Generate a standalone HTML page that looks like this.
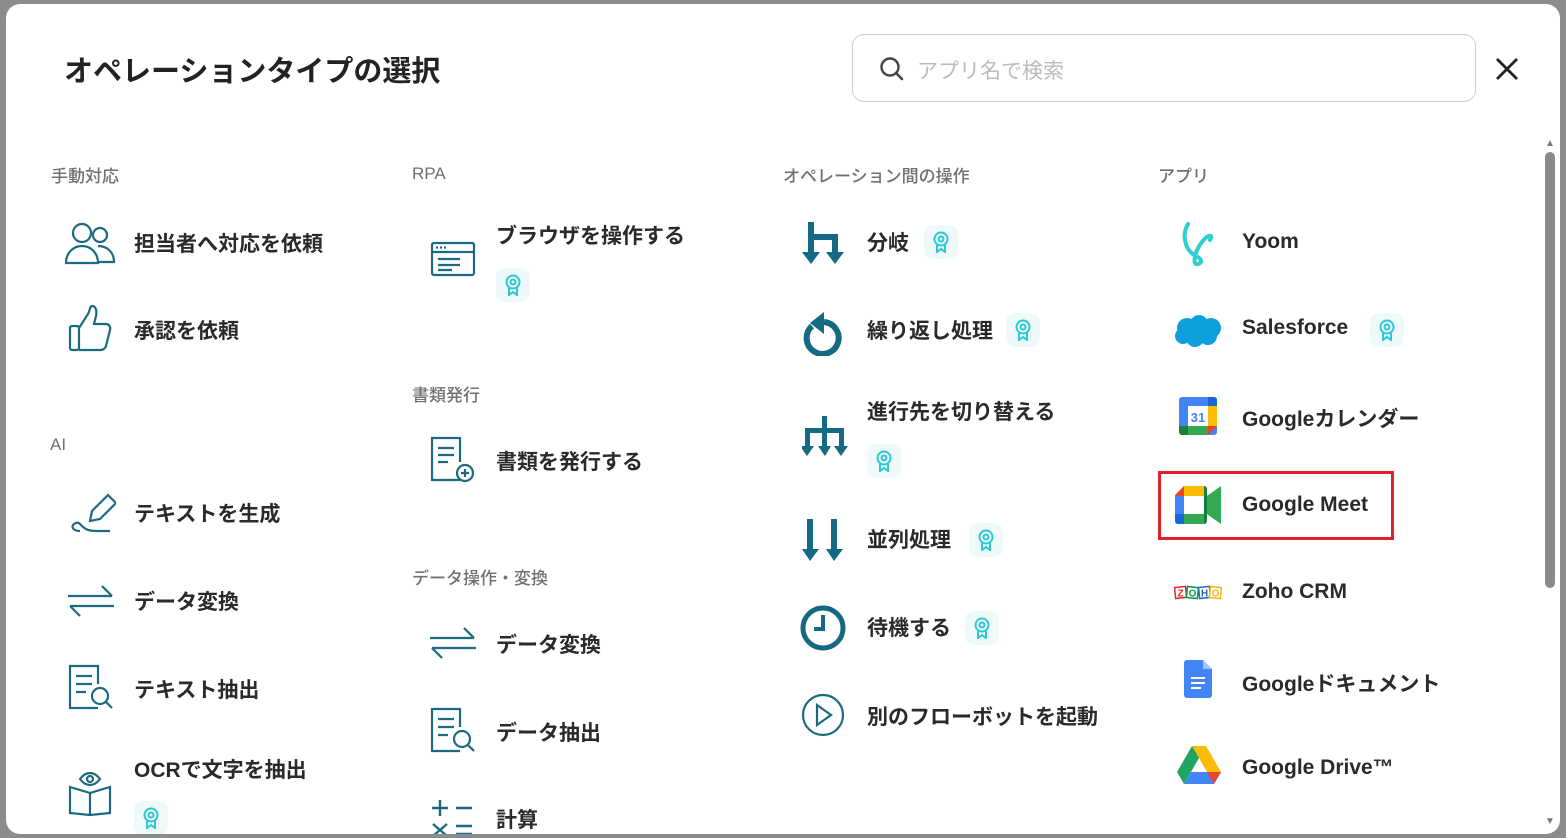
<!DOCTYPE html>
<html><head><meta charset="utf-8"><style>
*{margin:0;padding:0;box-sizing:border-box}
body{width:1566px;height:838px;background:#8c8c8c;overflow:hidden;font-family:"Liberation Sans","Noto Sans CJK JP",sans-serif;position:relative}
.modal{position:absolute;left:6px;top:4px;width:1554px;height:830px;background:#fff;border-radius:14px;overflow:hidden}
.a{position:absolute;white-space:nowrap}
h1{position:absolute;left:58px;top:44px;font-size:29px;font-weight:700;color:#222}
.sec{position:absolute;font-size:17px;color:#707070;font-weight:500}
.it{position:absolute;font-size:21px;font-weight:600;color:#2a2a2a;white-space:nowrap;margin-top:-2px}
.bd{position:absolute;width:34px;height:34px;border-radius:9px;background:#eef9f9}
.bd svg{position:absolute;left:8px;top:6px}
.ic{position:absolute}
</style></head><body>
<div class="modal">
<h1>オペレーションタイプの選択</h1>
<div class="a" style="left:846px;top:30px;width:624px;height:68px;border:1px solid #ccc;border-radius:12px"></div>
<svg class="ic" style="left:873px;top:52px" width="26" height="26" viewBox="0 0 26 26"><circle cx="11" cy="11" r="8.5" fill="none" stroke="#444" stroke-width="2.4"/><path d="M17 17l6 6" stroke="#444" stroke-width="2.6" stroke-linecap="round"/></svg>
<div class="a" style="left:911px;top:51px;font-size:21px;color:#bbb">アプリ名で検索</div>
<svg class="ic" style="left:1488px;top:52px" width="26" height="26" viewBox="0 0 26 26"><path d="M3 3l20 20M23 3L3 23" stroke="#222" stroke-width="2.8"/></svg>

<div class="sec" style="left:45px;top:158px">手動対応</div>
<div class="sec" style="left:406px;top:160px">RPA</div>
<div class="sec" style="left:777px;top:158px">オペレーション間の操作</div>
<div class="sec" style="left:1152px;top:158px">アプリ</div>
<div class="sec" style="left:406px;top:377px">書類発行</div>
<div class="sec" style="left:44px;top:431px">AI</div>
<div class="sec" style="left:406px;top:560px">データ操作・変換</div>

<!-- col1 -->
<svg class="ic" style="left:58px;top:215px" width="54" height="46" viewBox="0 0 54 46" fill="none" stroke="#1b6a80" stroke-width="2.2"><circle cx="18" cy="14" r="9"/><path d="M2 44c0-10 7-17 16-17s16 7 16 17z"/><circle cx="36" cy="16" r="7"/><path d="M34 27c9 0 16 6 16 16H34"/></svg>
<div class="it" style="left:128px;top:226px">担当者へ対応を依頼</div>
<svg class="ic" style="left:62px;top:300px" width="44" height="48" viewBox="0 0 44 48" fill="none" stroke="#1b6a80" stroke-width="2.2"><rect x="2" y="22" width="9" height="24" rx="2"/><path d="M11 24l9-14c2-4 2-8 4-8 4 0 5 5 4 10l-2 8h12c3 0 5 3 4 6l-4 16c-1 3-3 4-6 4H11"/></svg>
<div class="it" style="left:128px;top:313px">承認を依頼</div>
<svg class="ic" style="left:62px;top:487px" width="48" height="46" viewBox="0 0 48 46" fill="none" stroke="#1b6a80" stroke-width="2.2"><path d="M22 30l2-10 16-16 8 8-16 16z"/><path d="M12 40c-8 0-10-6-4-8s4 8 20 8h14"/></svg>
<div class="it" style="left:128px;top:496px">テキストを生成</div>
<svg class="ic" style="left:60px;top:580px" width="50" height="34" viewBox="0 0 50 34" fill="none" stroke="#1b6a80" stroke-width="2.2"><path d="M2 12h44M36 2l10 10M48 22H4M14 32L4 22"/></svg>
<div class="it" style="left:128px;top:584px">データ変換</div>
<svg class="ic" style="left:62px;top:660px" width="46" height="48" viewBox="0 0 46 48" fill="none" stroke="#1b6a80" stroke-width="2.2"><path d="M30 44H2V2h28v18"/><path d="M8 12h16M8 20h16M8 28h10"/><circle cx="32" cy="32" r="8"/><path d="M38 38l6 6"/></svg>
<div class="it" style="left:128px;top:672px">テキスト抽出</div>
<svg class="ic" style="left:62px;top:765px" width="44" height="48" viewBox="0 0 44 48" fill="none" stroke="#1b6a80" stroke-width="2.2"><path d="M2 18l20 6 20-6v26l-20 2-20-2z"/><path d="M22 24v22"/><path d="M12 10c6-8 14-8 20 0-6 8-14 8-20 0z"/><circle cx="22" cy="10" r="3"/></svg>
<div class="it" style="left:128px;top:752px">OCRで文字を抽出</div>
<div class="bd" style="left:128px;top:797px"><svg width="18" height="22" viewBox="0 0 18 22" fill="none" stroke="#2cc7d6" stroke-width="2"><circle cx="9" cy="8" r="6.5"/><circle cx="9" cy="8" r="2.5"/><path d="M5 14v7l4-3 4 3v-7"/></svg></div>

<!-- col2 -->
<svg class="ic" style="left:424px;top:237px" width="46" height="36" viewBox="0 0 46 36" fill="none" stroke="#1b6a80" stroke-width="2.2"><rect x="2" y="2" width="42" height="32" rx="2"/><path d="M2 11h42M8 18h22M8 24h22M8 29h14"/><path d="M6 6.5h2M10 6.5h2M14 6.5h2"/></svg>
<div class="it" style="left:490px;top:218px">ブラウザを操作する</div>
<div class="bd" style="left:490px;top:264px"><svg width="18" height="22" viewBox="0 0 18 22" fill="none" stroke="#2cc7d6" stroke-width="2"><circle cx="9" cy="8" r="6.5"/><circle cx="9" cy="8" r="2.5"/><path d="M5 14v7l4-3 4 3v-7"/></svg></div>
<svg class="ic" style="left:424px;top:432px" width="46" height="48" viewBox="0 0 46 48" fill="none" stroke="#1b6a80" stroke-width="2.2"><path d="M30 44H2V2h28v24"/><path d="M8 12h16M8 19h16M8 26h10"/><circle cx="35" cy="37" r="8"/><path d="M35 33v8M31 37h8"/></svg>
<div class="it" style="left:490px;top:444px">書類を発行する</div>
<svg class="ic" style="left:422px;top:622px" width="50" height="34" viewBox="0 0 50 34" fill="none" stroke="#1b6a80" stroke-width="2.2"><path d="M2 12h44M36 2l10 10M48 22H4M14 32L4 22"/></svg>
<div class="it" style="left:490px;top:627px">データ変換</div>
<svg class="ic" style="left:424px;top:703px" width="46" height="48" viewBox="0 0 46 48" fill="none" stroke="#1b6a80" stroke-width="2.2"><path d="M30 44H2V2h28v18"/><path d="M8 12h16M8 20h16M8 28h10"/><circle cx="32" cy="32" r="8"/><path d="M38 38l6 6"/></svg>
<div class="it" style="left:490px;top:715px">データ抽出</div>
<svg class="ic" style="left:424px;top:794px" width="44" height="40" viewBox="0 0 44 40" fill="none" stroke="#1b6a80" stroke-width="2.4"><path d="M2 10h16M10 2v16M26 10h16M3 26l14 12M17 26L3 38M26 28h16M26 36h16"/></svg>
<div class="it" style="left:490px;top:802px">計算</div>

<!-- col3 -->
<svg class="ic" style="left:796px;top:218px" width="42" height="42" viewBox="0 0 42 42" fill="#136a82"><path d="M6 0h6v30h6L9 42 0 30h6zM12 12h24v18h6l-9 12-9-12h6V18H12z"/></svg>
<div class="it" style="left:861px;top:225px">分岐</div>
<div class="bd" style="left:918px;top:221px"><svg width="18" height="22" viewBox="0 0 18 22" fill="none" stroke="#2cc7d6" stroke-width="2"><circle cx="9" cy="8" r="6.5"/><circle cx="9" cy="8" r="2.5"/><path d="M5 14v7l4-3 4 3v-7"/></svg></div>
<svg class="ic" style="left:796px;top:306px" width="42" height="46" viewBox="0 0 42 46" fill="none"><path d="M10 16a16 16 0 1 0 12-4" stroke="#136a82" stroke-width="6"/><path d="M22 2v22L8 13z" fill="#136a82"/></svg>
<div class="it" style="left:861px;top:313px">繰り返し処理</div>
<div class="bd" style="left:1000px;top:309px"><svg width="18" height="22" viewBox="0 0 18 22" fill="none" stroke="#2cc7d6" stroke-width="2"><circle cx="9" cy="8" r="6.5"/><circle cx="9" cy="8" r="2.5"/><path d="M5 14v7l4-3 4 3v-7"/></svg></div>
<svg class="ic" style="left:796px;top:412px" width="46" height="42" viewBox="0 0 46 42" fill="#136a82"><path d="M20 0h5v12h17v18h4l-7 10-7-10h5V17H25v13h4l-6 10-7-10h4V17H8v13h4L5 40l-7-10h5V12h17z"/></svg>
<div class="it" style="left:861px;top:394px">進行先を切り替える</div>
<div class="bd" style="left:861px;top:440px"><svg width="18" height="22" viewBox="0 0 18 22" fill="none" stroke="#2cc7d6" stroke-width="2"><circle cx="9" cy="8" r="6.5"/><circle cx="9" cy="8" r="2.5"/><path d="M5 14v7l4-3 4 3v-7"/></svg></div>
<svg class="ic" style="left:796px;top:515px" width="42" height="42" viewBox="0 0 42 42" fill="#136a82"><path d="M5 0h6v30h6L8 42 0 30h5zM29 0h6v30h6l-9 12-8-12h5z"/></svg>
<div class="it" style="left:861px;top:522px">並列処理</div>
<div class="bd" style="left:963px;top:519px"><svg width="18" height="22" viewBox="0 0 18 22" fill="none" stroke="#2cc7d6" stroke-width="2"><circle cx="9" cy="8" r="6.5"/><circle cx="9" cy="8" r="2.5"/><path d="M5 14v7l4-3 4 3v-7"/></svg></div>
<svg class="ic" style="left:793px;top:600px" width="48" height="48" viewBox="0 0 48 48" fill="none" stroke="#136a82"><circle cx="24" cy="24" r="20" stroke-width="5"/><path d="M24 11v14h-9" stroke-width="4"/></svg>
<div class="it" style="left:861px;top:610px">待機する</div>
<div class="bd" style="left:959px;top:607px"><svg width="18" height="22" viewBox="0 0 18 22" fill="none" stroke="#2cc7d6" stroke-width="2"><circle cx="9" cy="8" r="6.5"/><circle cx="9" cy="8" r="2.5"/><path d="M5 14v7l4-3 4 3v-7"/></svg></div>
<svg class="ic" style="left:795px;top:689px" width="44" height="44" viewBox="0 0 44 44" fill="none" stroke="#1b6a80" stroke-width="2.2"><circle cx="22" cy="22" r="20"/><path d="M16 12l14 10-14 10z"/></svg>
<div class="it" style="left:861px;top:699px">別のフローボットを起動</div>

<!-- col4 -->
<svg class="ic" style="left:1174px;top:216px" width="40" height="48" viewBox="0 0 40 48" fill="none" stroke="#2dd0cf" stroke-width="4" stroke-linecap="round"><path d="M8 4C2 14 4 30 16 36c4 2 8 6 2 8-6 2-4-12 4-22 6-8 12-8 8-2"/></svg>
<div class="it" style="left:1236px;top:228px">Yoom</div>
<svg class="ic" style="left:1169px;top:310px" width="48" height="34" viewBox="0 0 48 34" fill="#0ea0dd"><circle cx="12" cy="14" r="10"/><circle cx="24" cy="10" r="9"/><circle cx="36" cy="14" r="10"/><circle cx="8" cy="22" r="8"/><circle cx="20" cy="24" r="9"/><circle cx="33" cy="22" r="9"/></svg>
<div class="it" style="left:1236px;top:314px">Salesforce</div>
<div class="bd" style="left:1364px;top:309px"><svg width="18" height="22" viewBox="0 0 18 22" fill="none" stroke="#2cc7d6" stroke-width="2"><circle cx="9" cy="8" r="6.5"/><circle cx="9" cy="8" r="2.5"/><path d="M5 14v7l4-3 4 3v-7"/></svg></div>
<svg class="ic" style="left:1173px;top:393px" width="38" height="38" viewBox="0 0 38 38"><rect x="0" y="0" width="38" height="38" rx="3" fill="#4285f4"/><rect x="29" y="9" width="9" height="20" fill="#fbbc04"/><rect x="9" y="29" width="20" height="9" fill="#34a853"/><path d="M0 29h9v9H3a3 3 0 0 1-3-3z" fill="#188038"/><path d="M29 29h9l-9 9z" fill="#ea4335"/><path d="M29 0h6a3 3 0 0 1 3 3v6h-9z" fill="#1967d2"/><rect x="9" y="9" width="20" height="20" fill="#fff"/><text x="19" y="25" font-size="13" text-anchor="middle" fill="#4285f4" font-family="Liberation Sans" font-weight="bold">31</text></svg>
<div class="it" style="left:1236px;top:401px">Googleカレンダー</div>
<div class="a" style="left:1152px;top:467px;width:236px;height:69px;border:3px solid #e0202a"></div>
<svg class="ic" style="left:1169px;top:482px" width="46" height="38" viewBox="0 0 46 38"><path d="M9 0h20v10H9z" fill="#fbbc04"/><path d="M0 9L9 0v10H0z" fill="#ea4335"/><path d="M0 10h9v18H0z" fill="#4285f4"/><path d="M0 28h9v10H3a3 3 0 0 1-3-3z" fill="#1967d2"/><path d="M9 28h20v10H9z" fill="#34a853"/><path d="M29 0a3 3 0 0 1 3 3v32a3 3 0 0 1-3 3V0z" fill="#188038"/><path d="M29 12l17-12v38L29 26z" fill="#34a853"/><path d="M29 10h3v18h-3z" fill="#0c8043"/><rect x="9" y="10" width="20" height="18" fill="#fff"/></svg>
<div class="it" style="left:1236px;top:491px">Google Meet</div>
<svg class="ic" style="left:1168px;top:580px" width="48" height="16" viewBox="0 0 48 16"><rect x="1" y="3" width="11" height="11" fill="#fff" stroke="#e42527" stroke-width="1.5" transform="rotate(-6 6 8)"/><text x="6.5" y="12.5" font-size="10" font-weight="bold" text-anchor="middle" fill="#e42527" font-family="Liberation Sans">Z</text><rect x="13" y="3" width="11" height="11" fill="#fff" stroke="#089949" stroke-width="1.5" transform="rotate(6 18 8)"/><text x="18.5" y="12.5" font-size="10" font-weight="bold" text-anchor="middle" fill="#089949" font-family="Liberation Sans">O</text><rect x="25" y="3" width="11" height="11" fill="#fff" stroke="#226db4" stroke-width="1.5" transform="rotate(-6 30 8)"/><text x="30.5" y="12.5" font-size="10" font-weight="bold" text-anchor="middle" fill="#226db4" font-family="Liberation Sans">H</text><rect x="36" y="3" width="11" height="11" fill="#fff" stroke="#f9b21d" stroke-width="1.5" transform="rotate(6 41 8)"/><text x="41.5" y="12.5" font-size="10" font-weight="bold" text-anchor="middle" fill="#f9b21d" font-family="Liberation Sans">O</text></svg>
<div class="it" style="left:1236px;top:578px">Zoho CRM</div>
<svg class="ic" style="left:1178px;top:656px" width="28" height="38" viewBox="0 0 28 38"><path d="M0 3a3 3 0 0 1 3-3h16l9 9v26a3 3 0 0 1-3 3H3a3 3 0 0 1-3-3z" fill="#4285f4"/><path d="M19 0v9h9z" fill="#a1c2fa"/><path d="M7 18h14M7 23h14M7 28h10" stroke="#fff" stroke-width="2"/></svg>
<div class="it" style="left:1236px;top:666px">Googleドキュメント</div>
<svg class="ic" style="left:1171px;top:742px" width="44" height="38" viewBox="0 0 44 38"><path d="M15 0h14l15 26H30z" fill="#fbbc04"/><path d="M15 0L0 26l7 12 15-26z" fill="#1fa463"/><path d="M7 38h30l7-12H14z" fill="#4285f4"/><path d="M37 38l7-12H30z" fill="#ea4335"/></svg>
<div class="it" style="left:1236px;top:754px">Google Drive™</div>

<!-- scrollbar -->
<div class="a" style="left:1539px;top:148px;width:10px;height:436px;background:#8a8a8a;border-radius:5px"></div>
<div class="a" style="left:1539px;top:134px;font-size:10px;color:#777">▲</div>
<div class="a" style="left:1539px;top:812px;font-size:10px;color:#777">▼</div>
</div>
</body></html>
